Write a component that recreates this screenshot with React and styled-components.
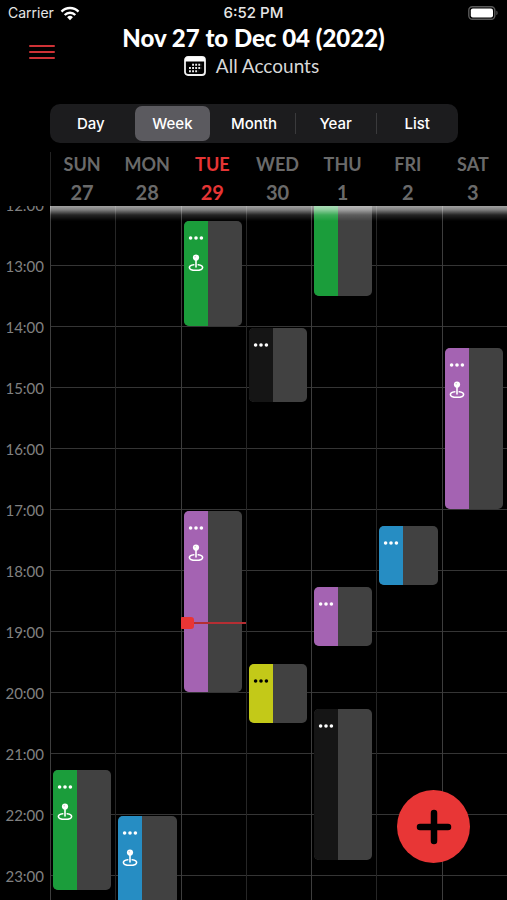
import React, { useState } from 'react'
import styled, { createGlobalStyle } from 'styled-components'

const HOUR_HEIGHT = 61
const FIRST_HOUR = 12

const GlobalStyle = createGlobalStyle`
  * {
    box-sizing: border-box;
  }

  body {
    margin: 0;
    background: #000;
    color: #fff;
    font-family: Lato, 'Open Sans', sans-serif;
  }

  button {
    margin: 0;
    padding: 0;
    border: none;
    color: inherit;
    background: none;
    font: inherit;
    cursor: pointer;
  }
`

const Page = styled.div`
  display: flex;
  flex-direction: column;
  height: 100vh;
  overflow: hidden;
`

const StatusBar = styled.div`
  display: grid;
  grid-template-columns: 1fr auto 1fr;
  align-items: center;
  height: 26px;
  padding: 0 8px;
  font: 400 14px/20px Inter, sans-serif;
  color: #e6e6e6;
`

const Carrier = styled.div`
  display: flex;
  align-items: center;
  gap: 6px;
`

const Clock = styled.time`
  font-size: 15px;
  font-weight: 500;
`

const Battery = styled.svg`
  justify-self: end;
`

const TopBar = styled.header`
  display: grid;
  grid-template-columns: 84px 1fr 84px;
  align-items: center;
  height: 52px;
`

const MenuButton = styled.button`
  display: flex;
  justify-content: center;
  height: 40px;
  align-items: center;
`

const Heading = styled.div`
  display: flex;
  flex-direction: column;
  align-items: center;
  gap: 4px;
  white-space: nowrap;
`

const Title = styled.h1`
  margin: 0;
  font-size: 24px;
  line-height: 24px;
  font-weight: 900;
`

const Accounts = styled.button`
  display: flex;
  align-items: center;
  gap: 10px;
  padding-right: 4px;
  font-size: 19px;
  line-height: 24px;
  color: #d8d8d8;
`

const Segments = styled.div`
  display: grid;
  grid-template-columns: repeat(5, 1fr);
  flex: none;
  height: 39px;
  margin: 26px 49px 9px 50px;
  padding: 2px 0;
  border-radius: 10px;
  background: #1c1c1e;
`

const Segment = styled.button`
  position: relative;
  margin: 0 3px;
  border-radius: 7px;
  background: ${p => p.$active ? '#5b5a5f' : 'transparent'};
  font: 500 15px/20px Inter, sans-serif;

  &::before {
    content: '';
    display: ${p => p.$divided ? 'block' : 'none'};
    position: absolute;
    left: -3px;
    top: 7px;
    bottom: 7px;
    width: 1px;
    background: #3a3a3c;
  }
`

const DaysHeader = styled.div`
  display: grid;
  grid-template-columns: repeat(7, 1fr);
  flex: none;
  height: 54px;
  margin-left: 50px;
  border-left: 1px solid #222;
`

const DayName = styled.div`
  display: flex;
  flex-direction: column;
  align-items: center;
  padding-right: 3px;
  font-size: 18px;
  line-height: 24px;
  font-weight: 700;
  color: ${p => p.$today ? '#e63535' : '#6a6a6a'};
`

const DayNumber = styled.span`
  font-size: 20px;
  line-height: 32px;
`

const Calendar = styled.main`
  display: flex;
  flex: 1;
  min-height: 0;
  overflow: hidden;
`

const Hours = styled.div`
  flex: none;
  width: 50px;
  margin-top: -32px;
`

const Hour = styled.div`
  display: flex;
  align-items: center;
  justify-content: flex-end;
  height: ${HOUR_HEIGHT}px;
  padding-right: 6px;
  font-size: 15px;
  color: #808080;
`

/* the soft light under the header is painted over the events */
const Grid = styled.div`
  position: relative;
  display: grid;
  grid-template-columns: repeat(7, 1fr);
  flex: 1;

  &::after {
    content: '';
    position: absolute;
    top: 0;
    left: 0;
    right: 0;
    height: 15px;
    background: linear-gradient(
      rgba(255, 255, 255, .64),
      rgba(255, 255, 255, .5) 25%,
      rgba(255, 255, 255, .14) 60%,
      transparent
    );
    pointer-events: none;
  }
`

const DayColumn = styled.div`
  position: relative;
  border-left: 1px solid ${p => p.$strong ? '#3d3d3d' : '#262626'};
  background: repeating-linear-gradient(
    transparent 0 ${HOUR_HEIGHT - 2}px,
    #353535 ${HOUR_HEIGHT - 2}px ${HOUR_HEIGHT - 1}px,
    transparent ${HOUR_HEIGHT - 1}px ${HOUR_HEIGHT}px
  );
`

const EventCard = styled.button`
  position: absolute;
  left: 2px;
  right: 4px;
  display: flex;
  border-radius: 5px;
  background: #414141;
  overflow: hidden;
`

const Strip = styled.span`
  display: flex;
  flex-direction: column;
  align-items: center;
  gap: 14px;
  width: 24px;
  height: 100%;
  padding-top: 15px;
  background: ${p => p.$color};
  color: ${p => p.$ink || '#fff'};
`

const NowLine = styled.div`
  position: absolute;
  left: -1px;
  right: 0;
  display: flex;
  align-items: center;
  height: 12px;

  &::before {
    content: '';
    width: 13px;
    height: 12px;
    border-radius: 1px 3px 3px 1px;
    background: #e93535;
  }

  &::after {
    content: '';
    flex: 1;
    height: 2px;
    background: #b52e33;
  }
`

const AddButton = styled.button`
  position: fixed;
  right: 37px;
  bottom: 37px;
  display: flex;
  align-items: center;
  justify-content: center;
  width: 73px;
  height: 73px;
  border-radius: 50%;
  background: #e83636;
  color: #000;
`

const GREEN = '#1b9d3b'
const PURPLE = '#a463b2'
const BLUE = '#268dc3'
const BLACK = '#151515'
const YELLOW = '#c3c918'

const days = [
  { name: 'SUN', number: 27, events: [{ start: 21.25, end: 23.25, color: GREEN, pin: true }] },
  { name: 'MON', number: 28, events: [{ start: 22, end: 24, color: BLUE, pin: true }] },
  {
    name: 'TUE',
    number: 29,
    today: true,
    events: [
      { start: 12.25, end: 14, color: GREEN, pin: true },
      { start: 17, end: 20, color: PURPLE, pin: true }
    ]
  },
  {
    name: 'WED',
    number: 30,
    events: [
      { start: 14, end: 15.25, color: BLACK },
      { start: 19.5, end: 20.5, color: YELLOW, ink: '#000' }
    ]
  },
  {
    name: 'THU',
    number: 1,
    events: [
      { start: 11, end: 13.5, color: GREEN },
      { start: 18.25, end: 19.25, color: PURPLE },
      { start: 20.25, end: 22.75, color: BLACK }
    ]
  },
  { name: 'FRI', number: 2, events: [{ start: 17.25, end: 18.25, color: BLUE }] },
  { name: 'SAT', number: 3, events: [{ start: 14.33, end: 17, color: PURPLE, pin: true }] }
]

const hours = Array.from({ length: 12 }, (_, i) => FIRST_HOUR + i)
const views = ['Day', 'Week', 'Month', 'Year', 'List']
const NOW = 18.85

const offset = hour => Math.round((hour - FIRST_HOUR) * HOUR_HEIGHT)

const Dots = () => (
  <svg width='16' height='4' viewBox='0 0 16 4' fill='currentColor'>
    <circle cx='2.600' cy='2' r='1.800' />
    <circle cx='8' cy='2' r='1.800' />
    <circle cx='13.400' cy='2' r='1.800' />
  </svg>
)

const Pin = () => (
  <svg width='16' height='18' viewBox='0 0 16 18' fill='none' stroke='currentColor'>
    <circle cx='8' cy='3.600' r='3.100' fill='currentColor' stroke='none' />
    <circle cx='7.200' cy='2.800' r='.8' fill='#000' fillOpacity='.2' stroke='none' />
    <path d='M8 5v8' strokeWidth='1.600' strokeLinecap='round' />
    <path
      d='M5.800 10.800C3.200 11.100 1.400 12 1.400 13.400c0 1.800 3 2.900 6.600 2.900s6.600-1.100 6.600-2.900c0-1.400-1.800-2.300-4.400-2.600'
      strokeWidth='1.600'
      strokeLinecap='round'
    />
  </svg>
)

const Wifi = () => (
  <svg width='20' height='15' viewBox='0 0 20 15' fill='none' stroke='#fff' strokeWidth='2.400'>
    <path d='M1.500 5.600a12 12 0 0 1 17 0' />
    <path d='M4.700 9a7.500 7.500 0 0 1 10.600 0' />
    <path d='M10 14.300l-2.900-3a4.100 4.100 0 0 1 5.800 0z' fill='#fff' stroke='none' />
  </svg>
)

const CalendarIcon = () => (
  <svg width='22' height='20' viewBox='0 0 22 20'>
    <rect x='1' y='1' width='20' height='18' rx='3' fill='none' stroke='#f0f0f0' strokeWidth='1.800' />
    <path d='M1 5.500V4a3 3 0 0 1 3-3h14a3 3 0 0 1 3 3v1.500z' fill='#fff' />
    <path
      d='M8.100 8.800h9.400M5 12h12.500M5 15.200h9.400'
      stroke='#e8e8e8'
      strokeWidth='1.900'
      strokeDasharray='1.900 1.200'
    />
  </svg>
)

const Event = ({ event }) => (
  <EventCard
    aria-label='Event'
    style={{
      top: offset(event.start),
      height: offset(event.end) - offset(event.start) - 2
    }}
  >
    <Strip $color={event.color} $ink={event.ink}>
      <Dots />
      {event.pin && <Pin />}
    </Strip>
  </EventCard>
)

const App = () => {
  const [view, setView] = useState('Week')

  return (
    <Page>
      <GlobalStyle />
      <StatusBar>
        <Carrier>Carrier <Wifi /></Carrier>
        <Clock>6:52 PM</Clock>
        <Battery width='31' height='14' viewBox='0 0 31 14'>
          <rect x='.8' y='.8' width='26' height='12.400' rx='3.500' fill='none' stroke='#5a5a5a' strokeWidth='1.400' />
          <rect x='2.800' y='2.500' width='22.200' height='9' rx='2' fill='#fff' />
          <path d='M28.400 4.800c1.600.5 1.600 3.900 0 4.400z' fill='#5a5a5a' />
        </Battery>
      </StatusBar>
      <TopBar>
        <MenuButton aria-label='Menu'>
          <svg width='28' height='16' viewBox='0 0 28 16' stroke='#cf3236' strokeWidth='2' strokeLinecap='round'>
            <path d='M2 2h24M2 8h24M2 14h24' />
          </svg>
        </MenuButton>
        <Heading>
          <Title>Nov 27 to Dec 04 (2022)</Title>
          <Accounts><CalendarIcon /> All Accounts</Accounts>
        </Heading>
      </TopBar>
      <Segments>
        {views.map((name, i) => (
          <Segment
            key={name}
            $active={view === name}
            $divided={i > 0 && view !== name && view !== views[i - 1]}
            aria-pressed={view === name}
            onClick={() => setView(name)}
          >
            {name}
          </Segment>
        ))}
      </Segments>
      <DaysHeader>
        {days.map(day => (
          <DayName key={day.name} $today={day.today}>
            {day.name}
            <DayNumber>{day.number}</DayNumber>
          </DayName>
        ))}
      </DaysHeader>
      <Calendar>
        <Hours>
          {hours.map(hour => <Hour key={hour}>{hour}:00</Hour>)}
        </Hours>
        <Grid>
          {days.map((day, i) => (
            <DayColumn key={day.name} $strong={i % 2 === 0}>
              {day.events.map(event => <Event key={event.start} event={event} />)}
              {day.today && <NowLine style={{ top: offset(NOW) - 7 }} />}
            </DayColumn>
          ))}
        </Grid>
      </Calendar>
      <AddButton aria-label='Add event'>
        <svg width='36' height='36' viewBox='0 0 36 36' stroke='currentColor' strokeWidth='6.500' strokeLinecap='round'>
          <path d='M18 4v28M4 18h28' />
        </svg>
      </AddButton>
    </Page>
  )
}

export default App
